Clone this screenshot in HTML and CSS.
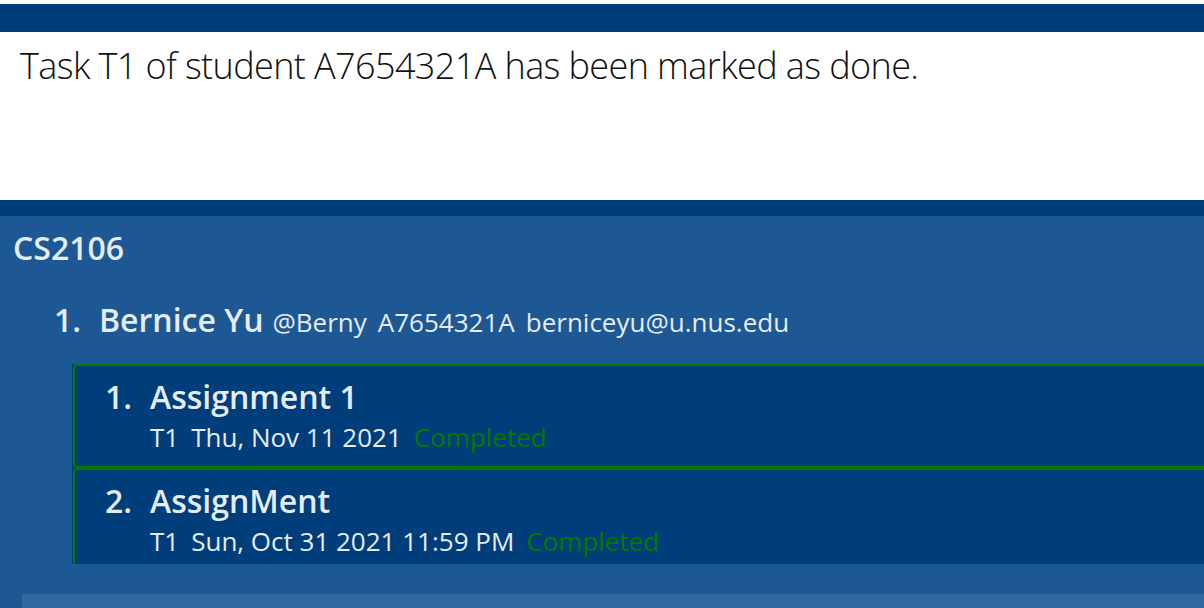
FILE: index.html
```html
<!DOCTYPE html>
<html>
<head>
<meta charset="utf-8">
<link rel="stylesheet" href="styles.css">
</head>
<body>
<div class="top-gap"></div>
<div class="menu-bar"></div>
<div class="result">Task T1 of student A7654321A has been marked as done.</div>
<div class="divider"></div>
<main class="panel">
  <h1 class="group-title">CS2106</h1>
  <div class="student">
    <span class="num">1.</span>
    <span class="name">Bernice Yu</span>
    <span class="meta">@Berny</span>
    <span class="meta">A7654321A</span>
    <span class="meta">berniceyu@u.nus.edu</span>
  </div>
  <div class="tasks">
    <div class="task-cell">
      <div class="task-card">
        <div class="task-title"><span class="tnum">1.</span><span>Assignment 1</span></div>
        <div class="task-info"><span>T1</span><span>Thu, Nov 11 2021</span><span class="done">Completed</span></div>
      </div>
    </div>
    <div class="task-cell">
      <div class="task-card">
        <div class="task-title"><span class="tnum">2.</span><span>AssignMent</span></div>
        <div class="task-info"><span>T1</span><span>Sun, Oct 31 2021 11:59 PM</span><span class="done">Completed</span></div>
      </div>
    </div>
  </div>
  <div class="gap-row"></div>
  <div class="bottom-band"></div>
</main>
</body>
</html>
```
FILE: styles.css
```css
html, body {
  margin: 0;
  padding: 0;
  background: #ffffff;
  overflow: hidden;
  width: 1204px;
  height: 608px;
  font-family: "Open Sans", "Noto Sans", sans-serif;
}
.top-gap { height: 4px; background: #ffffff; }
.menu-bar { height: 28px; background: #003d7b; }
.result {
  height: 168px;
  box-sizing: border-box;
  padding: 8px 0 0 20px;
  font-size: 36px;
  line-height: 52px;
  font-weight: 300;
  color: #111;
  letter-spacing: -0.6px;
}
.divider { height: 16px; background: #003d7b; }
.panel {
  height: 392px;
  background: #1e5894;
  color: #e4ecf5;
  display: flex;
  flex-direction: column;
  overflow: hidden;
}
.group-title {
  margin: 0;
  padding: 10px 0 0 13px;
  font-size: 32px;
  line-height: 44px;
  font-weight: 600;
}
.student {
  display: flex;
  align-items: baseline;
  margin-top: 28px;
  padding-left: 54px;
  line-height: 44px;
}
.num { width: 45px; font-size: 32px; font-weight: 600; }
.name { font-size: 32px; font-weight: 600; margin-right: 9px; }
.meta { font-size: 26px; margin-right: 11px; }
.tasks {
  margin: 20px -10px 0 72px;
  height: 200px;
  overflow: hidden;
  flex: none;
}
.task-cell { background: #003d7b; }
.task-card {
  border: 2px solid #007a00;
  border-radius: 4px;
  padding: 9px 0 12px 30px;
  margin-left: 1px;
}
.task-title {
  display: flex;
  font-size: 32px;
  line-height: 44px;
  font-weight: 600;
}
.tnum { width: 45px; }
.task-info {
  display: flex;
  gap: 12px;
  padding-left: 45px;
  margin-top: 2px;
  font-size: 26px;
  line-height: 33px;
}
.done { color: #007a00; }
.gap-row { height: 30px; flex: none; }
.bottom-band { margin-left: 22px; background: #2f69a0; flex: 1; }
```
